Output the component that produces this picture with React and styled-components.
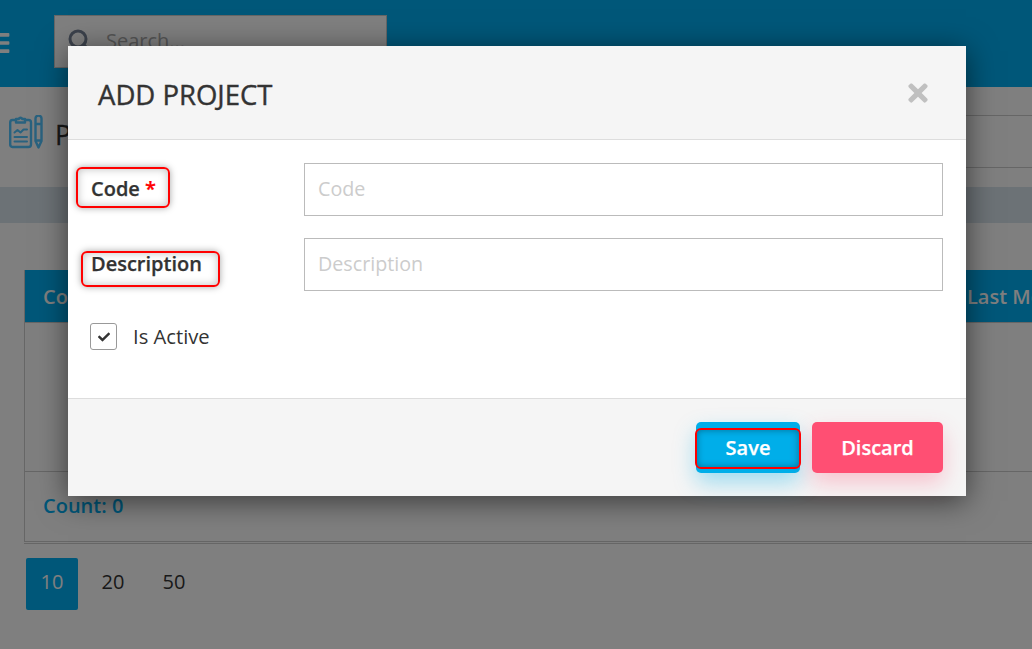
import React from 'react';
import styled, { createGlobalStyle } from 'styled-components';
import { FaBars, FaCheck, FaTimes } from 'react-icons/fa';
import { Search } from 'lucide-react';

const Global = createGlobalStyle`
  html, body { margin: 0; padding: 0; height: 100%; overflow: hidden; background: #fff; }
  body { font-family: "Open Sans", "Liberation Sans", sans-serif; color: #333; }
  * { box-sizing: border-box; }
`;

const Page = styled.div`
  position: relative;
  width: 1032px;
  height: 649px;
  overflow: hidden;
`;
const TopBar = styled.header`
  height: 87px;
  background: #00aef2;
  display: flex;
  align-items: flex-start;
  padding-top: 15px;
`;
const Burger = styled.div`
  width: 54px;
  height: 53px;
  display: flex;
  align-items: center;
  color: #fff;
  font-size: 26px;
  margin-left: -15px;
  margin-right: 15px;
  flex: none;
  & svg { margin-top: 3px; }
`;
const SearchBox = styled.div`
  width: 333px;
  height: 53px;
  background: #fff;
  border: 1px solid #ccc;
  display: flex;
  align-items: center;
  padding: 0 0 3px 12px;
  gap: 15px;
  color: #788599;
`;
const SearchText = styled.span`
  font-size: 20px;
  color: #aaa;
`;
const TitleBar = styled.div`
  height: 100px;
  display: flex;
  align-items: flex-start;
  padding: 28px 0 0 9px;
  gap: 12px;
`;
const PageTitle = styled.h1`
  margin: 0;
  font-size: 27px;
  font-weight: 500;
  line-height: 40px;
  color: #333;
  -webkit-text-stroke: 0.3px #333;
`;
const FilterInput = styled.div`
  margin-left: auto;
  width: 400px;
  height: 53px;
  border-top: 1px solid #ccc;
  border-bottom: 1px solid #ccc;
`;
const Band = styled.div`
  height: 36px;
  background: #d8e4ec;
`;
const TableWrap = styled.section`
  margin: 47px 0 0 24px;
  padding-bottom: 1px;
  border-bottom: 1px solid #ccc;
`;
const TableFrame = styled.div`
  border-left: 1px solid #ccc;
  border-bottom: 1px solid #ccc;
`;
const TableHead = styled.div`
  height: 52px;
  background: #00aef2;
  color: #fff;
  font-size: 20px;
  font-weight: 600;
  display: flex;
  align-items: center;
  justify-content: space-between;
  padding-left: 18px;
  white-space: nowrap;
  overflow: hidden;
`;
const LastHead = styled.span`
  width: 65px;
  overflow: hidden;
`;
const TableBody = styled.div`
  height: 150px;
  border-top: 1px solid #ccc;
  border-bottom: 1px solid #ccc;
`;
const TableFoot = styled.div`
  height: 69px;
  padding: 22px 0 0 18px;
  color: #00aef2;
  font-size: 20px;
  font-weight: 600;
  line-height: 24px;
`;
const Pager = styled.nav`
  display: flex;
  margin: 14px 0 0 26px;
`;
const PageBtn = styled.span`
  width: 52px;
  height: 52px;
  margin-right: 9px;
  padding-bottom: 6px;
  display: flex;
  align-items: center;
  justify-content: center;
  font-size: 20px;
  border-radius: 2px;
  color: ${p => (p.$active ? '#fff' : '#333')};
  background: ${p => (p.$active ? '#00aef2' : 'transparent')};
`;
const Overlay = styled.div`
  position: absolute;
  inset: 0;
  background: rgba(0, 0, 0, 0.5);
`;
const Dialog = styled.div`
  position: absolute;
  left: 68px;
  top: 46px;
  width: 898px;
  height: 450px;
  background: #fff;
  box-shadow: 0 5px 28px rgba(0, 0, 0, 0.55);
  display: flex;
  flex-direction: column;
`;
const DialogHead = styled.div`
  height: 94px;
  background: #f5f5f5;
  border-bottom: 1px solid #ddd;
  display: flex;
  align-items: center;
  justify-content: space-between;
  padding: 4px 34px 0 30px;
`;
const DialogTitle = styled.h2`
  margin: 0;
  font-size: 27.5px;
  font-weight: 500;
  color: #333;
  -webkit-text-stroke: 0.4px #333;
`;
const CloseBtn = styled.span`
  display: flex;
  color: #c0c0c0;
  font-size: 28px;
  margin-top: -4px;
`;
const DialogBody = styled.div`
  flex: 1;
  padding: 23px 23px 0 23px;
`;
const FormRow = styled.div`
  display: flex;
  height: 53px;
  margin-bottom: 22px;
`;
const FieldLabel = styled.label`
  position: relative;
  width: 213px;
  flex: none;
  font-size: 20px;
  font-weight: 600;
  color: #333;
  line-height: 26px;
  padding-top: 13px;
  -webkit-text-stroke: 0.25px currentColor;
`;
const Star = styled.span`
  color: #f00;
`;
const Marker = styled.span`
  position: absolute;
  left: ${p => p.$left}px;
  top: ${p => p.$top}px;
  width: ${p => p.$w}px;
  height: ${p => p.$h}px;
  border: 2px solid #f00;
  border-radius: 6px;
  box-shadow: 0 0 7px rgba(0, 0, 0, 0.35), inset 0 0 8px rgba(0, 0, 0, 0.25);
  pointer-events: none;
`;
const TextField = styled.input`
  flex: 1;
  height: 53px;
  border: 1px solid #bbb;
  border-radius: 0;
  padding: 0 13px 2px;
  font: 400 19.7px "Open Sans", "Liberation Sans", sans-serif;
  outline: none;
  &::placeholder { color: #ccc; opacity: 1; }
`;
const CheckRow = styled.div`
  display: flex;
  align-items: center;
  gap: 16px;
  margin-left: -1px;
  margin-top: 32px;
  font-size: 20.2px;
  color: #333;
  line-height: 27px;
`;
const CheckBox = styled.span`
  width: 27px;
  height: 27px;
  border: 1px solid #999;
  border-radius: 3px;
  display: flex;
  align-items: center;
  justify-content: center;
  font-size: 12px;
  color: #333;
`;
const DialogFoot = styled.div`
  height: 98px;
  background: #f5f5f5;
  border-top: 1px solid #ddd;
  display: flex;
  justify-content: flex-end;
  gap: 12px;
  padding: 23px 23px 0 0;
`;
const ActionBtn = styled.button`
  position: relative;
  width: ${p => p.$w}px;
  height: 51px;
  border: 0;
  border-radius: 5px;
  color: #fff;
  font: 600 20px "Open Sans", "Liberation Sans", sans-serif;
  -webkit-text-stroke: 0.25px #fff;
  background: ${p => p.$bg};
  box-shadow: 0 10px 22px ${p => p.$glow};
`;
const SaveMarker = styled.span`
  position: absolute;
  left: -1px;
  top: 6px;
  width: 106px;
  height: 41px;
  border: 2px solid #f00;
  border-radius: 6px;
  box-shadow: inset 0 0 7px rgba(0, 0, 0, 0.35);
`;

const ProjectIcon = () => (
  <svg width="34" height="34" viewBox="0 0 34 34" fill="none" stroke="#52c4ff" strokeWidth="2.4" strokeLinejoin="round" strokeLinecap="round" style={{ flex: 'none' }}>
    <path d="M7 5H3.500A2.500 2.500 0 0 0 1.200 7.500v22A2.500 2.500 0 0 0 3.500 32h16a2.500 2.500 0 0 0 2.500-2.500v-22A2.500 2.500 0 0 0 19.500 5H16" />
    <path d="M7 7.500V4h2.800a1.800 1.800 0 0 1 3.400 0H16v3.500H7z" />
    <path d="M5.500 17.500l3-2.500 3 2.500 3-3H18M5.500 22H18M5.500 26.500H18" strokeWidth="2" />
    <path d="M26.500 3.500a3 3 0 0 1 6 0V26l-3 6.500-3-6.500zM26.500 9h6M26.500 25.500h6" />
  </svg>
);

export default function App() {
  return (
    <Page>
      <Global />
      <TopBar>
        <Burger><FaBars /></Burger>
        <SearchBox><Search size={24} strokeWidth={3} /><SearchText>Search...</SearchText></SearchBox>
      </TopBar>
      <TitleBar>
        <ProjectIcon />
        <PageTitle>Projects</PageTitle>
        <FilterInput />
      </TitleBar>
      <Band />
      <TableWrap>
        <TableFrame>
          <TableHead><span>Code</span><LastHead>Last Modified</LastHead></TableHead>
          <TableBody />
          <TableFoot>Count: 0</TableFoot>
        </TableFrame>
      </TableWrap>
      <Pager>
        <PageBtn $active>10</PageBtn>
        <PageBtn>20</PageBtn>
        <PageBtn>50</PageBtn>
      </Pager>
      <Overlay />
      <Dialog>
        <DialogHead>
          <DialogTitle>ADD PROJECT</DialogTitle>
          <CloseBtn><FaTimes /></CloseBtn>
        </DialogHead>
        <DialogBody>
          <FormRow>
            <FieldLabel>
              Code <Star>*</Star>
              <Marker $left={-15} $top={4} $w={94} $h={41} />
            </FieldLabel>
            <TextField placeholder="Code" />
          </FormRow>
          <FormRow>
            <FieldLabel>
              Description
              <Marker $left={-10} $top={13} $w={139} $h={36} />
            </FieldLabel>
            <TextField placeholder="Description" />
          </FormRow>
          <CheckRow>
            <CheckBox><FaCheck /></CheckBox>
            <span>Is Active</span>
          </CheckRow>
        </DialogBody>
        <DialogFoot>
          <ActionBtn $w={104} $bg="#00aee9" $glow="rgba(0,174,233,.35)">Save<SaveMarker /></ActionBtn>
          <ActionBtn $w={131} $bg="#ff4f73" $glow="rgba(255,79,115,.3)">Discard</ActionBtn>
        </DialogFoot>
      </Dialog>
    </Page>
  );
}
